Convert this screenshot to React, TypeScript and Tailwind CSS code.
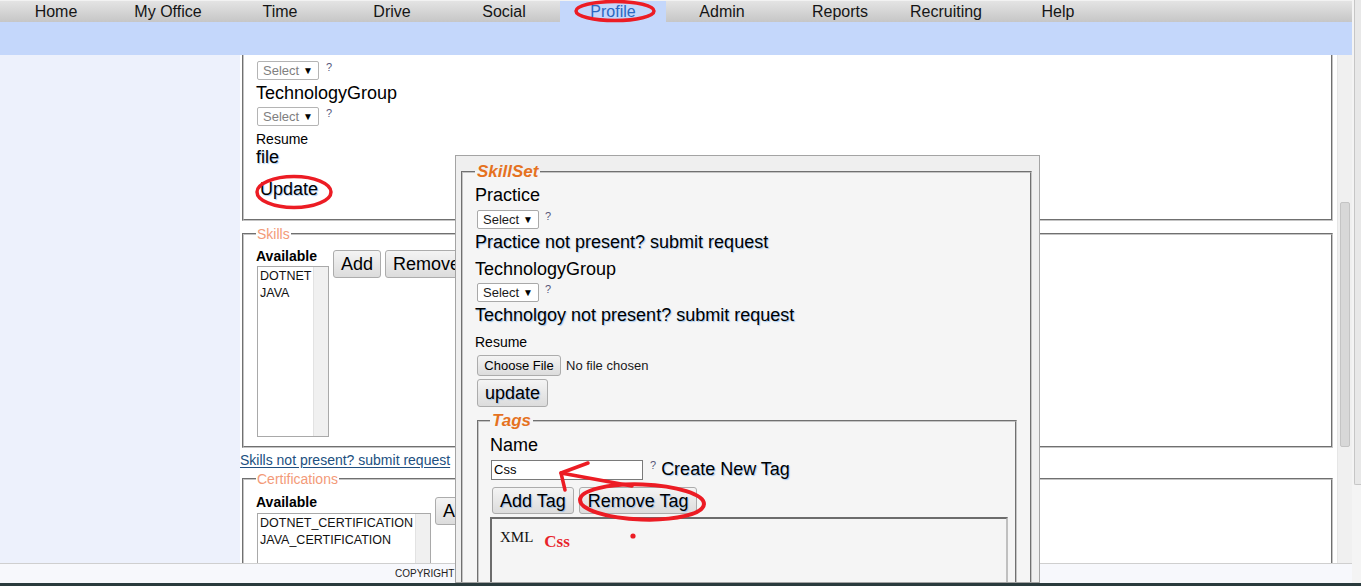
import React from "react";

const F = "font-['Liberation_Sans',Arial,sans-serif]";
const GLOW = "[text-shadow:1px_1px_1px_rgba(90,160,235,0.55)]";

function Sel({ dim }: { dim?: boolean }) {
  return (
    <div
      className={`flex items-center justify-between w-[62px] h-[19px] border rounded-[2px] bg-white pl-[5px] pr-[5px] text-[13px] leading-none ${
        dim ? "border-[#b4b4b4] text-[#808080]" : "border-[#a9a9a9] text-[#1a1a1a]"
      }`}
    >
      <span>Select</span>
      <span className="text-[10px] text-black">▼</span>
    </div>
  );
}

function Q({ ml = "ml-[7px]" }: { ml?: string }) {
  return <span className={`${ml} text-[11px] leading-none text-[#55557a] mt-[1px]`}>?</span>;
}

function Btn({ children, cls = "" }: { children: React.ReactNode; cls?: string }) {
  return (
    <div
      className={`inline-flex items-center justify-center border border-[#acacac] rounded-[3px] bg-linear-to-b from-[#f4f4f4] to-[#dcdcdc] text-black ${cls}`}
    >
      {children}
    </div>
  );
}

function ListBox({ w, h, items }: { w: string; h: string; items: string[] }) {
  return (
    <div className={`flex ${w} ${h} border border-[#a9a9a9] bg-white`}>
      <div className="flex-1 pl-[2px] pt-[1px] text-[12.5px] leading-[17px] text-[#111] overflow-hidden whitespace-nowrap">
        {items.map((t) => (
          <div key={t}>{t}</div>
        ))}
      </div>
      <div className="w-[15px] bg-[#f0f0f0] border-l border-[#e2e2e2]" />
    </div>
  );
}

const NAV: [string, string][] = [
  ["Home", "w-[112px]"],
  ["My Office", "w-[112px]"],
  ["Time", "w-[112px]"],
  ["Drive", "w-[112px]"],
  ["Social", "w-[112px]"],
  ["Profile", "w-[106px]"],
  ["Admin", "w-[112px]"],
  ["Reports", "w-[124px]"],
  ["Recruiting", "w-[88px]"],
  ["Help", "w-[136px]"],
];

export default function App() {
  return (
    <div className={`w-[1361px] h-[586px] overflow-hidden flex flex-col bg-white ${F}`}>
      <div className="relative flex h-[583px]">
        {/* page */}
        <div className="w-[1352px] flex flex-col">
          {/* nav */}
          <div className="h-[22px] flex bg-linear-to-b from-[#e4e4e4] to-[#c6c6c6] border-t border-[#f2f2f2]">
            {NAV.map(([n, w]) => (
              <div
                key={n}
                className={`${w} flex items-center justify-center text-[16px] leading-none ${
                  n === "Profile" ? "bg-[#c4d7fb] text-[#2b68c2]" : "text-[#151515]"
                }`}
              >
                {n}
              </div>
            ))}
          </div>
          {/* band */}
          <div className="h-[33px] bg-[#c4d7fb]" />
          {/* main */}
          <div className="h-[508px] flex">
            <div className="w-[240px] bg-[#edf1fc]" />
            <div className="w-[1097px] overflow-hidden flex flex-col">
              {/* box 1 (scrolled) */}
              <div className="ml-[2px] mr-[4px] border-x-2 border-b-2 [border-style:groove] border-[#c4c4c4] pl-[12px] pb-[19px]">
                <div className="flex items-start mt-[6px] ml-[1px]">
                  <Sel dim />
                  <Q />
                </div>
                <div className="mt-[3px] text-[18px] leading-[21px] text-black">TechnologyGroup</div>
                <div className="flex items-start mt-[3px] ml-[1px]">
                  <Sel dim />
                  <Q />
                </div>
                <div className="mt-[5px] text-[14px] leading-[16px] text-black">Resume</div>
                <div className={`text-[18px] leading-[21px] text-black ${GLOW}`}>file</div>
                <div className={`mt-[11px] ml-[4px] text-[18px] leading-[21px] text-black ${GLOW}`}>Update</div>
              </div>
              {/* skills */}
              <fieldset className="mt-[5px] ml-[2px] mr-[4px] border-2 [border-style:groove] border-[#c4c4c4] pl-[12px] pt-[6px] pb-[9px]">
                <legend className="px-[1px] text-[14px] leading-[16px] text-[#f39a78]">Skills</legend>
                <div className="flex items-start">
                  <div className="flex flex-col">
                    <div className="text-[14px] leading-[16px] font-bold text-black">Available</div>
                    <div className="mt-[2px] ml-[1px]">
                      <ListBox w="w-[72px]" h="h-[171px]" items={["DOTNET", "JAVA"]} />
                    </div>
                  </div>
                  <div className="flex gap-[4px] mt-[2px] ml-[4px]">
                    <Btn cls="h-[28px] px-[7px] text-[18px] leading-none">Add</Btn>
                    <Btn cls="h-[28px] px-[7px] text-[18px] leading-none">Remove</Btn>
                  </div>
                </div>
              </fieldset>
              <div className="mt-[4px] text-[14px] leading-[16px] text-[#214f80] underline underline-offset-2">
                Skills not present? submit request
              </div>
              {/* certifications */}
              <fieldset className="mt-[3px] ml-[2px] mr-[4px] border-2 [border-style:groove] border-[#c4c4c4] pl-[12px] pt-[7px] pb-[9px]">
                <legend className="px-[1px] text-[14px] leading-[16px] text-[#f39a78]">Certifications</legend>
                <div className="flex items-start">
                  <div className="flex flex-col">
                    <div className="text-[14px] leading-[16px] font-bold text-black">Available</div>
                    <div className="mt-[3px] ml-[1px]">
                      <ListBox
                        w="w-[174px]"
                        h="h-[171px]"
                        items={["DOTNET_CERTIFICATION", "JAVA_CERTIFICATION"]}
                      />
                    </div>
                  </div>
                  <div className="flex gap-[4px] mt-[3px] ml-[4px]">
                    <Btn cls="h-[28px] px-[7px] text-[18px] leading-none">Add</Btn>
                    <Btn cls="h-[28px] px-[7px] text-[18px] leading-none">Remove</Btn>
                  </div>
                </div>
              </fieldset>
            </div>
            {/* inner scrollbar */}
            <div className="w-[15px] bg-[#f0f0f0] border-l border-[#e6e6e6] flex flex-col items-center">
              <div className="mt-[147px] w-[10px] h-[245px] rounded-[2px] bg-[#d8d8d8] border border-[#c4c4c4]" />
            </div>
          </div>
          {/* footer */}
          <div className="h-[20px] border-t border-[#cfcfcf] bg-[#f7f8fc] pl-[395px] flex items-center text-[10px] leading-none text-[#222]">
            COPYRIGHT
          </div>
        </div>
        {/* outer scrollbar strip */}
        <div className="w-[9px] bg-[#f4f4f4] flex">
          <div className="ml-[2px] w-[7px] h-[485px] bg-[#e8e8e8] border-l border-b border-[#c6c6c6] rounded-bl-[2px]" />
        </div>

        {/* dialog */}
        <div className="absolute left-[455px] top-[155px] w-[585px] h-[428px] overflow-hidden border border-[#a4a4a4] bg-[#efefef] pl-[5px] pr-[7px] pt-[7px]">
          <fieldset className="border-2 [border-style:groove] border-[#c4c4c4] bg-[#f5f5f5] pl-[12px] pr-[13px] pt-[4px]">
            <legend className="px-[2px] text-[17px] leading-[18px] font-bold italic text-[#e5721f]">SkillSet</legend>
            <div className="text-[18px] leading-[21px] text-black">Practice</div>
            <div className="flex items-start mt-[4px] ml-[2px]">
              <Sel />
              <Q ml="ml-[6px]" />
            </div>
            <div className={`mt-[3px] text-[18px] leading-[21px] text-black ${GLOW}`}>
              Practice not present? submit request
            </div>
            <div className="mt-[6px] text-[18px] leading-[21px] text-black">TechnologyGroup</div>
            <div className="flex items-start mt-[3px] ml-[2px]">
              <Sel />
              <Q ml="ml-[6px]" />
            </div>
            <div className={`mt-[3px] text-[18px] leading-[21px] text-black ${GLOW}`}>
              Technolgoy not present? submit request
            </div>
            <div className="mt-[8px] text-[14px] leading-[16px] text-black">Resume</div>
            <div className="mt-[5px] ml-[2px] flex items-center">
              <Btn cls="w-[84px] h-[21px] text-[13px] leading-none">Choose File</Btn>
              <span className="ml-[5px] text-[13px] leading-none text-[#1a1a1a]">No file chosen</span>
            </div>
            <div className="mt-[3px] ml-[2px]">
              <Btn cls={`h-[28px] px-[7px] text-[18px] leading-none ${GLOW}`}>update</Btn>
            </div>
            <fieldset className="mt-[5px] ml-[2px] h-[200px] border-2 [border-style:groove] border-[#c4c4c4] pl-[11px] pr-[7px] pt-[5px]">
              <legend className="px-[2px] text-[17px] leading-[18px] font-bold italic text-[#e5721f]">Tags</legend>
              <div className="text-[18px] leading-[21px] text-black">Name</div>
              <div className="mt-[3px] flex items-center ml-[1px]">
                <div className="w-[152px] h-[20px] border border-[#7a7a7a] bg-white pl-[2px] flex items-center text-[13px] leading-none text-black">
                  Css
                </div>
                <span className="ml-[7px] self-start text-[11px] leading-none text-[#55557a] mt-[1px]">?</span>
                <span className={`ml-[5px] text-[18px] leading-[21px] text-black ${GLOW}`}>Create New Tag</span>
              </div>
              <div className="mt-[7px] ml-[2px] flex gap-[5px]">
                <Btn cls={`h-[27px] px-[7px] text-[18px] leading-none ${GLOW}`}>Add Tag</Btn>
                <Btn cls={`h-[27px] px-[8px] text-[18px] leading-none ${GLOW}`}>Remove Tag</Btn>
              </div>
              <div className="mt-[3px] h-[120px] border-2 [border-style:inset] border-[#c0c0c0] bg-[#f5f5f5] pl-[8px] pt-[9px] flex items-start font-['Liberation_Serif','Times_New_Roman',serif]">
                <span className="text-[15px] leading-[18px] text-[#111]">XML</span>
                <span className="ml-[11px] mt-[5px] text-[17px] leading-[18px] font-bold text-[#e8232a]">Css</span>
              </div>
            </fieldset>
          </fieldset>
        </div>

        {/* annotations */}
        <svg
          className="absolute left-0 top-0 pointer-events-none"
          width="1361"
          height="583"
          viewBox="0 0 1361 583"
        >
          <g fill="none" stroke="#ec1c24" strokeLinecap="round" strokeLinejoin="round">
            <ellipse cx="615" cy="11" rx="39" ry="9.5" strokeWidth="3.5" />
            <ellipse cx="294" cy="192" rx="37" ry="15.5" strokeWidth="3.5" />
            <ellipse cx="642" cy="502" rx="62" ry="17.5" strokeWidth="4" transform="rotate(2 642 502)" />
            <path d="M588 463 L561 473 L565 490" strokeWidth="3.5" />
            <path d="M561 473 L632 486" strokeWidth="3.5" />
          </g>
          <circle cx="633" cy="536" r="2.6" fill="#ec1c24" />
        </svg>
      </div>
      <div className="h-[3px] bg-[#2a3b3d]" />
    </div>
  );
}
